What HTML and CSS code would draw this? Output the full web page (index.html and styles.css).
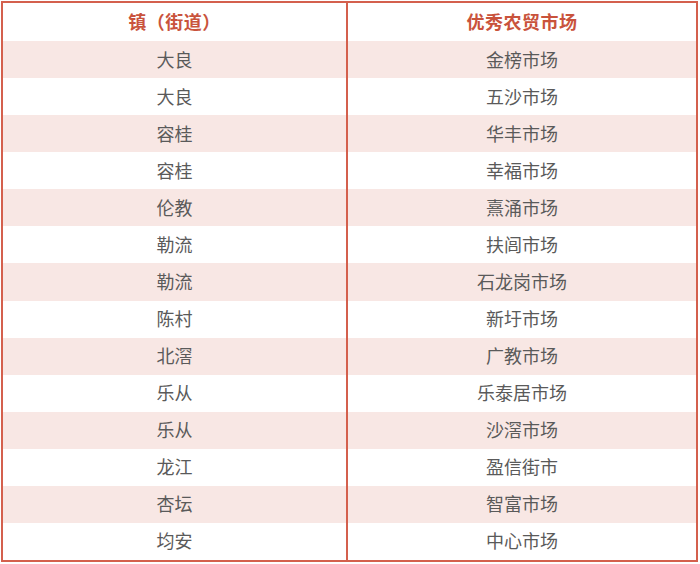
FILE: index.html
```html
<!DOCTYPE html>
<html lang="zh">
<head>
<meta charset="utf-8">
<link rel="stylesheet" href="styles.css">
</head>
<body>
<div class="page">
  <div class="table">
    <div class="cell head left">镇（街道）</div>
    <div class="cell head">优秀农贸市场</div>
    <div class="cell left odd">大良</div><div class="cell odd">金榜市场</div>
    <div class="cell left">大良</div><div class="cell">五沙市场</div>
    <div class="cell left odd">容桂</div><div class="cell odd">华丰市场</div>
    <div class="cell left">容桂</div><div class="cell">幸福市场</div>
    <div class="cell left odd">伦教</div><div class="cell odd">熹涌市场</div>
    <div class="cell left">勒流</div><div class="cell">扶闾市场</div>
    <div class="cell left odd">勒流</div><div class="cell odd">石龙岗市场</div>
    <div class="cell left">陈村</div><div class="cell">新圩市场</div>
    <div class="cell left odd">北滘</div><div class="cell odd">广教市场</div>
    <div class="cell left">乐从</div><div class="cell">乐泰居市场</div>
    <div class="cell left odd">乐从</div><div class="cell odd">沙滘市场</div>
    <div class="cell left">龙江</div><div class="cell">盈信街市</div>
    <div class="cell left odd">杏坛</div><div class="cell odd">智富市场</div>
    <div class="cell left">均安</div><div class="cell">中心市场</div>
  </div>
</div>
</body>
</html>
```
FILE: styles.css
```css
html, body {
  margin: 0;
  padding: 0;
  background: #ffffff;
}
.page {
  width: 700px;
  height: 564px;
  padding: 1px 2px 2px 1px;
  box-sizing: border-box;
}
.table {
  height: 561px;
  box-sizing: border-box;
  border: 2px solid #d4604d;
  display: grid;
  grid-template-columns: 345px 1fr;
  grid-template-rows: 38px repeat(14, 1fr);
  font-family: "Noto Sans CJK SC", "Noto Sans", sans-serif;
}
.cell {
  display: flex;
  align-items: center;
  justify-content: center;
  padding-bottom: 2px;
  font-size: 18px;
  color: #5a5a5a;
  background: #ffffff;
}
.cell.left {
  border-right: 2px solid #d4604d;
}
.cell.odd {
  background: #f8e7e4;
}
.cell.head {
  color: #c9533c;
  font-weight: bold;
  font-size: 18px;
  letter-spacing: 0.5px;
}
```
